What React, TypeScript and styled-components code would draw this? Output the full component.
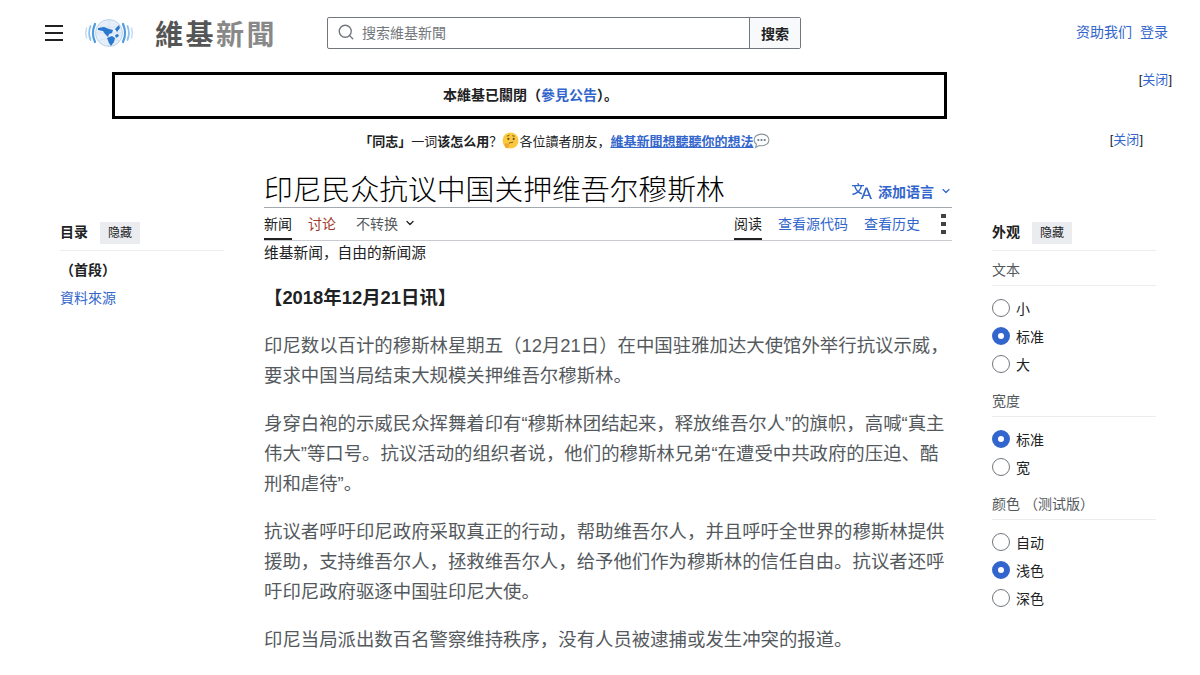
import React, {FC} from 'react';
import styled, {createGlobalStyle} from 'styled-components';
import {Search, ChevronDown} from 'lucide-react';

const GlobalStyle = createGlobalStyle`
  html, body {
    margin: 0;
    padding: 0;
    background: #fff;
    overflow: hidden;
  }
  body {
    font-family: "Liberation Sans", "Noto Sans CJK SC", sans-serif;
    font-size: 14px;
    color: #202122;
  }
  a {
    color: #36c;
    text-decoration: none;
  }
`

const Header = styled.header`
  display: flex;
  align-items: center;
  height: 66px;
  padding: 0 32px 0 45px;
`
const Burger = styled.div`
  display: flex;
  flex-direction: column;
  gap: 5px;
  width: 18px;
  margin-right: 21px;
  span {
    height: 2px;
    background: #202122;
  }
`
const Wordmark = styled.div`
  margin-left: 21px;
  width: 172px;
  font-size: 28px;
  font-weight: 700;
  letter-spacing: 2.5px;
  color: #555;
  span {
    color: #888;
  }
`
const SearchBox = styled.form`
  display: flex;
  width: 474px;
  height: 32px;
  box-sizing: border-box;
  border: 1px solid #72777d;
  border-radius: 2px;
`
const SearchField = styled.div`
  flex: 1;
  display: flex;
  align-items: center;
  gap: 7px;
  padding: 0 0 2px 9px;
  color: #72777d;
  font-size: 14px;
`
const SearchButton = styled.div`
  width: 51px;
  padding-bottom: 1px;
  box-sizing: border-box;
  display: flex;
  align-items: center;
  justify-content: center;
  background: #f8f9fa;
  border-left: 1px solid #72777d;
  font-weight: 700;
  font-size: 14px;
`
const UserLinks = styled.nav`
  margin-left: auto;
  padding-bottom: 4px;
  display: flex;
  gap: 8px;
`
const BannerRow = styled.div`
  display: flex;
  justify-content: space-between;
  align-items: flex-start;
  padding: 6px 28px 0 112px;
`
const Banner = styled.div`
  width: 835px;
  height: 47px;
  box-sizing: border-box;
  border: 3px solid #000;
  padding: 0 0 3px 2px;
  display: flex;
  align-items: center;
  justify-content: center;
  font-size: 14px;
  font-weight: 700;
  color: #202122;
`
const NoticeRow = styled.div`
  display: flex;
  align-items: center;
  height: 20px;
  padding: 11px 57px 0 20px;
`
const Notice = styled.div`
  flex: 1;
  display: flex;
  align-items: center;
  justify-content: center;
  font-size: 13px;
  b {
    font-weight: 700;
  }
  a {
    font-weight: 700;
    text-decoration: underline;
  }
`
const CloseLink = styled.span`
  font-size: 13px;
  line-height: 16px;
  color: #202122;
  a {
    color: #36c;
  }
`
const Page = styled.div`
  display: grid;
  grid-template-columns: 164px 688px 164px;
  column-gap: 40px;
  padding: 0 44px 0 60px;
  margin-top: 11px;
`
const Side = styled.aside`
  padding-top: 61px;
`
const SideHead = styled.div`
  display: flex;
  align-items: flex-start;
  gap: 12px;
  height: 22px;
  line-height: 20px;
  padding-bottom: 6px;
  border-bottom: 1px solid #eaecf0;
  font-weight: 700;
`
const HideButton = styled.span`
  width: 40px;
  height: 22px;
  display: flex;
  align-items: center;
  justify-content: center;
  background: #eaecf0;
  font-size: 12px;
  font-weight: 400;
`
const TocItem = styled.div<{$current?: boolean}>`
  height: 28px;
  line-height: 28px;
  font-weight: ${p => (p.$current ? 700 : 400)};
  color: ${p => (p.$current ? '#202122' : '#36c')};
`
const TocList = styled.div`
  padding-top: 5px;
`
const GroupTitle = styled.div`
  height: 27px;
  line-height: 25px;
  margin-top: 7px;
  border-bottom: 1px solid #eaecf0;
  font-size: 14px;
  color: #54595d;
`
const RadioList = styled.div`
  padding: 8px 0 4px;
`
const RadioRow = styled.label`
  display: flex;
  align-items: center;
  gap: 6px;
  height: 28px;
  font-size: 14px;
`
const Radio = styled.span<{$on?: boolean}>`
  width: 18px;
  height: 18px;
  box-sizing: border-box;
  border-radius: 50%;
  background: #fff;
  border: ${p => (p.$on ? '6px solid #36c' : '1px solid #72777d')};
`
const Main = styled.main`
  min-width: 0;
`
const TitleRow = styled.div`
  display: flex;
  justify-content: space-between;
  align-items: flex-end;
  height: 46px;
  border-bottom: 1px solid #a2a9b1;
`
const Title = styled.h1`
  margin: 0;
  font-size: 28.8px;
  font-weight: 300;
  line-height: 34px;
  color: #000;
`
const LangButton = styled.div`
  display: flex;
  align-items: center;
  gap: 6px;
  height: 32px;
  color: #36c;
  font-weight: 700;
  font-size: 14px;
`
const TabBar = styled.div`
  display: flex;
  justify-content: space-between;
  height: 32px;
  border-bottom: 1px solid #c8ccd1;
`
const TabGroup = styled.div`
  display: flex;
  gap: 16px;
`
const Tab = styled.div<{$active?: boolean; $color?: string}>`
  display: flex;
  align-items: center;
  gap: 6px;
  height: 32px;
  box-sizing: border-box;
  font-size: 14px;
  color: ${p => p.$color ?? '#36c'};
  border-bottom: 2px solid ${p => (p.$active ? '#202122' : 'transparent')};
`
const MoreDots = styled.div`
  display: flex;
  flex-direction: column;
  justify-content: center;
  gap: 4px;
  width: 16px;
  padding-left: 5px;
  box-sizing: border-box;
  span {
    width: 5px;
    height: 4px;
    background: #404244;
  }
`
const SiteSub = styled.div`
  height: 24px;
  line-height: 24px;
  font-size: 14.72px;
`
const Lead = styled.p`
  margin: 18px 0 0;
  font-size: 18.4px;
  font-weight: 700;
  line-height: 30px;
  color: #202122;
`
const Para = styled.p`
  margin: 18px 0 0;
  font-size: 18.4px;
  line-height: 30px;
  color: #54595d;
`

const LogoGlobe: FC = () => (
    <svg width="50" height="32" viewBox="0 0 50 32" fill="none">
        <g strokeLinecap="round">
            <path d="M11 7c-2.500 5.500-2.500 12.500 0 18" stroke="#4f9be0" strokeWidth="2.200" />
            <path d="M6.500 9c-1.800 4.500-1.800 9.500 0 14" stroke="#8cc0ee" strokeWidth="1.800" />
            <path d="M2.500 11c-1 3-1 7 0 10" stroke="#c2dcf5" strokeWidth="1.500" />
            <path d="M39 7c2.500 5.500 2.500 12.500 0 18" stroke="#4f9be0" strokeWidth="2.200" />
            <path d="M43.500 9c1.800 4.500 1.800 9.500 0 14" stroke="#8cc0ee" strokeWidth="1.800" />
            <path d="M47.500 11c1 3 1 7 0 10" stroke="#c2dcf5" strokeWidth="1.500" />
        </g>
        <circle cx="25" cy="16" r="13.500" fill="#e6eff9" stroke="#bcd2ea" />
        <path d="M11.500 16h27M25 2.500v27M14 8c7 3 15 3 22 0M14 24c7-3 15-3 22 0" stroke="#cfdef0" strokeWidth=".7" />
        <path d="M14 11l6-1 5 2 4 1-1 3-3 1-1 3-3-3-2-3-5-1zM23 21l5-2 3 2-1 4-3 4-2-3zM31 12l4-4 1 3-3 4zM31 18l3-1 1 2-3 2z" fill="#2b78cf" />
    </svg>
)

const TranslateIcon: FC = () => (
    <svg width="20" height="20" viewBox="0 0 20 20" fill="#36c">
        <path d="M20 18h-1.440a.6.6 0 01-.4-.12.8.8 0 01-.23-.31L17 15h-5l-1 2.540a.8.8 0 01-.22.3.6.6 0 01-.4.14H9l4.550-11.470h1.890zm-3.530-4.310L14.890 9.500a12 12 0 01-.39-1.240q-.09.37-.19.69l-.19.56-1.580 4.190zm-6.300-1.580a13.400 13.400 0 01-2.910-1.410 11.460 11.460 0 002.810-5.370H12V4H7.310a4 4 0 00-.2-.56C6.870 2.790 6.600 2 6.600 2l-1.470.5s.4.89.6 1.500H0v1.330h2.150A11.230 11.230 0 005 10.700a17.200 17.200 0 01-5 2.100q.56.82.87 1.380a23.300 23.300 0 005.220-2.510 15.600 15.600 0 003.560 1.770zM3.630 5.330h4.910a8.100 8.100 0 01-2.450 4.450 9.100 9.100 0 01-2.460-4.450" />
    </svg>
)

const ThinkingFace: FC = () => (
    <svg width="17" height="17" viewBox="0 0 16 16">
        <circle cx="8" cy="8" r="7.500" fill="#fbc93d" />
        <circle cx="6" cy="6.500" r="1" fill="#6b4a1e" />
        <circle cx="11" cy="6.500" r="1" fill="#6b4a1e" />
        <path d="M4.500 4l2.500-1M9.500 3.500l2.500.5M6.500 10.500l4-1" stroke="#6b4a1e" strokeWidth=".8" fill="none" />
        <path d="M2 11l4-.5 1 2.500-2 2.500-2-1z" fill="#f0a92c" />
    </svg>
)

const SpeechBubble: FC = () => (
    <svg width="17" height="17" viewBox="0 0 16 16">
        <path d="M8 2c4 0 7 2.300 7 5.500S12 13 8 13c-.8 0-1.500-.1-2.200-.3L2.500 14.500l.8-3C1.900 10.500 1 9.100 1 7.500 1 4.300 4 2 8 2z" fill="#fbfcfd" stroke="#8a939b" />
        <circle cx="5" cy="7.500" r="1" fill="#6f7880" />
        <circle cx="8" cy="7.500" r="1" fill="#6f7880" />
        <circle cx="11" cy="7.500" r="1" fill="#6f7880" />
    </svg>
)

const options = [
    {title: '文本', items: [{label: '小'}, {label: '标准', on: true}, {label: '大'}]},
    {title: '宽度', items: [{label: '标准', on: true}, {label: '宽'}]},
    {title: '颜色 （测试版）', items: [{label: '自动'}, {label: '浅色', on: true}, {label: '深色'}]}
]

const App: FC = () => {
    return (
        <div lang="zh">
            <GlobalStyle />
            <Header>
                <Burger><span /><span /><span /></Burger>
                <LogoGlobe />
                <Wordmark>維基<span>新聞</span></Wordmark>
                <SearchBox>
                    <SearchField>
                        <Search size={18} strokeWidth={1.8} />
                        搜索維基新聞
                    </SearchField>
                    <SearchButton>搜索</SearchButton>
                </SearchBox>
                <UserLinks>
                    <a>资助我们</a>
                    <a>登录</a>
                </UserLinks>
            </Header>
            <BannerRow>
                <Banner>本維基已關閉（<a>參見公告</a>）。</Banner>
                <CloseLink>[<a>关闭</a>]</CloseLink>
            </BannerRow>
            <NoticeRow>
                <Notice>
                    <b>「同志」</b>一词<b>该怎么用</b>？<ThinkingFace />各位讀者朋友，<a>維基新聞想聽聽你的想法</a><SpeechBubble />
                </Notice>
                <CloseLink>[<a>关闭</a>]</CloseLink>
            </NoticeRow>
            <Page>
                <Side>
                    <SideHead>目录<HideButton>隐藏</HideButton></SideHead>
                    <TocList>
                        <TocItem $current>（首段）</TocItem>
                        <TocItem>資料來源</TocItem>
                    </TocList>
                </Side>
                <Main>
                    <TitleRow>
                        <Title>印尼民众抗议中国关押维吾尔穆斯林</Title>
                        <LangButton>
                            <TranslateIcon />
                            添加语言
                            <ChevronDown size={12} strokeWidth={2.4} />
                        </LangButton>
                    </TitleRow>
                    <TabBar>
                        <TabGroup>
                            <Tab $active $color="#202122">新闻</Tab>
                            <Tab $color="#a3382a">讨论</Tab>
                            <Tab $color="#54595d">&nbsp;不转换<ChevronDown size={12} strokeWidth={2.6} color="#202122" /></Tab>
                        </TabGroup>
                        <TabGroup>
                            <Tab $active $color="#202122">阅读</Tab>
                            <Tab>查看源代码</Tab>
                            <Tab>查看历史</Tab>
                            <MoreDots><span /><span /><span /></MoreDots>
                        </TabGroup>
                    </TabBar>
                    <SiteSub>维基新闻，自由的新闻源</SiteSub>
                    <Lead>【2018年12月21日讯】</Lead>
                    <Para>印尼数以百计的穆斯林星期五（12月21日）在中国驻雅加达大使馆外举行抗议示威，要求中国当局结束大规模关押维吾尔穆斯林。</Para>
                    <Para>身穿白袍的示威民众挥舞着印有“穆斯林团结起来，释放维吾尔人”的旗帜，高喊“真主伟大”等口号。抗议活动的组织者说，他们的穆斯林兄弟“在遭受中共政府的压迫、酷刑和虐待”。</Para>
                    <Para>抗议者呼吁印尼政府采取真正的行动，帮助维吾尔人，并且呼吁全世界的穆斯林提供援助，支持维吾尔人，拯救维吾尔人，给予他们作为穆斯林的信任自由。抗议者还呼吁印尼政府驱逐中国驻印尼大使。</Para>
                    <Para>印尼当局派出数百名警察维持秩序，没有人员被逮捕或发生冲突的报道。</Para>
                </Main>
                <Side>
                    <SideHead>外观<HideButton>隐藏</HideButton></SideHead>
                    {options.map(group =>
                        <div key={group.title}>
                            <GroupTitle>{group.title}</GroupTitle>
                            <RadioList>
                                {group.items.map(item =>
                                    <RadioRow key={item.label}>
                                        <Radio $on={item.on} />
                                        {item.label}
                                    </RadioRow>
                                )}
                            </RadioList>
                        </div>
                    )}
                </Side>
            </Page>
        </div>
    );
};

export default App;
